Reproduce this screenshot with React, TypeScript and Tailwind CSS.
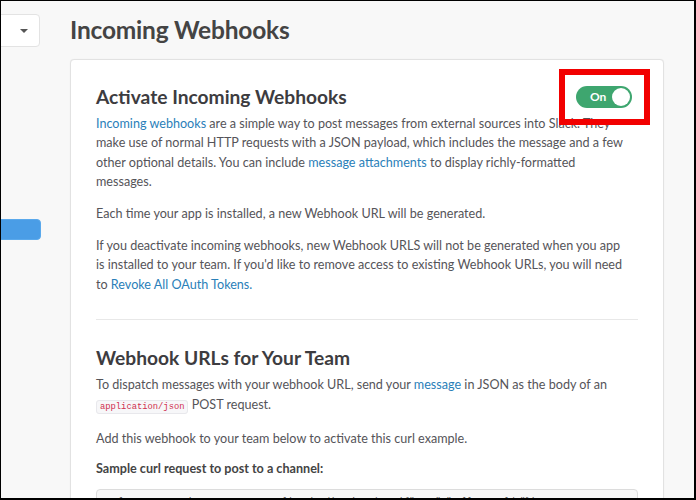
export default function App() {
  const link = 'text-[#2a80b9]';

  return (
    <div className="relative box-border h-[500px] w-[696px] overflow-hidden border-t border-l border-r-2 border-b-2 border-black bg-[#f8f8f8] font-['Lato','Liberation_Sans',sans-serif] text-[12.6px] leading-[19.4px] text-[#555459]">
      <div className="flex">
        {/* sidebar */}
        <div className="w-[69px] shrink-0">
          <div className="mt-[13px] -ml-[100px] flex h-[33px] w-[139px] items-center justify-end rounded border border-[#e3e3e3] bg-white pr-[11px]">
            <span className="h-0 w-0 border-x-[4px] border-t-[4px] border-x-transparent border-t-[#555]" />
          </div>
          <div className="mt-[172px] -ml-[100px] h-[21px] w-[140px] rounded border border-[#5aa9ec] bg-[#4a9de6]" />
        </div>

        {/* main */}
        <div className="w-[594px] shrink-0">
          <h1 className="pt-[14px] text-[24.5px] leading-[30px] font-bold tracking-[-0.2px] text-[#444]">Incoming Webhooks</h1>

          <div className="mt-[14px] rounded border border-[#e2e2e2] bg-white px-[25px] pt-[25px] shadow-[0_0_1px_rgba(0,0,0,0.08)]">
            <div className="flex items-center justify-between">
              <h2 className="text-[19.2px] leading-[24px] font-bold text-[#3d3c40]">Activate Incoming Webhooks</h2>
              <div className="mr-[6px] flex h-[22px] w-[56px] items-center justify-between rounded-full bg-[#3ea66f] pr-[2px] pl-[14px]">
                <span className="text-[12px] leading-none font-bold text-white">On</span>
                <span className="h-[18px] w-[18px] rounded-full bg-white" />
              </div>
            </div>

            <p className="mt-[5px]">
              <span className={link}>Incoming webhooks</span> are a simple way to post messages from external sources into Slack. They
              <br />
              make use of normal HTTP requests with a JSON payload, which includes the message and a few
              <br />
              other optional details. You can include <span className={link}>message attachments</span> to display richly-formatted
              <br />
              messages.
            </p>
            <p className="mt-[12px]">Each time your app is installed, a new Webhook URL will be generated.</p>
            <p className="mt-[13px]">
              If you deactivate incoming webhooks, new Webhook URLS will not be generated when you app
              <br />
              is installed to your team. If you'd like to remove access to existing Webhook URLs, you will need
              <br />
              to <span className={link}>Revoke All OAuth Tokens.</span>
            </p>

            <hr className="mt-[25px] border-[#e8e8e8]" />

            <h2 className="mt-[26px] text-[19.2px] leading-[24px] font-bold text-[#3d3c40]">Webhook URLs for Your Team</h2>
            <p className="mt-[5px]">
              To dispatch messages with your webhook URL, send your <span className={link}>message</span> in JSON as the body of an
              <br />
              <code className="rounded-[3px] border border-[#e8e8ec] bg-[#f7f7f9] px-[3px] py-px font-['Liberation_Mono',monospace] text-[8.8px] text-[#d0304f]">application/json</code> POST request.
            </p>
            <p className="mt-[12px]">Add this webhook to your team below to activate this curl example.</p>
            <p className="mt-[11px] font-bold text-[#444]">Sample curl request to post to a channel:</p>
            <pre className="mt-[10px] rounded border border-[#dcdcdc] bg-[#f7f7f7] px-[6px] pt-[6px] pb-4 font-['Liberation_Mono',monospace] text-[8.8px] leading-[12px] text-[#555]">
              curl -X POST -H 'Content-type: application/json' --data '{`{"text":"Hello, World!"}`}'
            </pre>
          </div>
        </div>
      </div>

      {/* annotation */}
      <div className="absolute top-[68px] left-[558px] h-[56px] w-[91px] border-[6px] border-[#f20000]" />
    </div>
  );
}
